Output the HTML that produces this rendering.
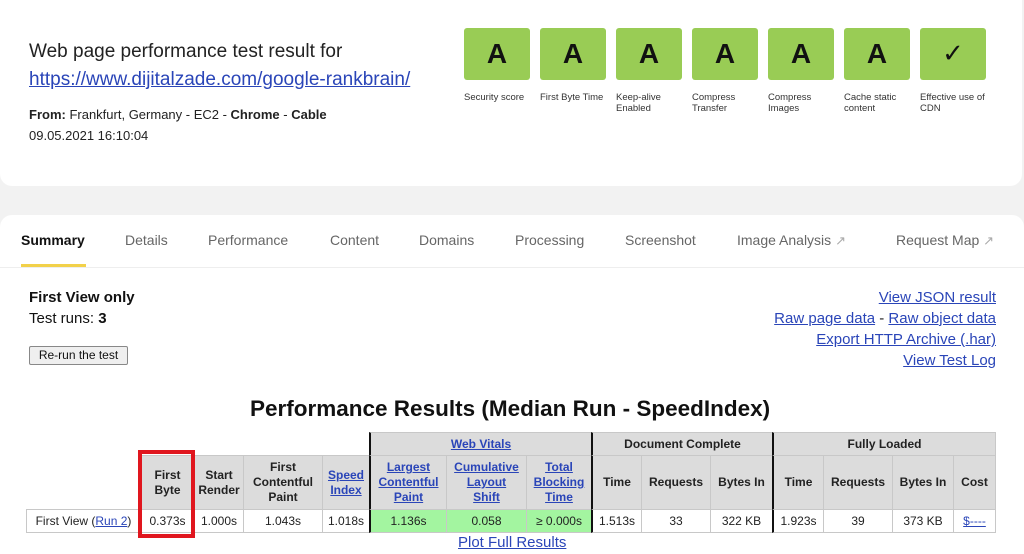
<!DOCTYPE html>
<html><head><meta charset="utf-8"><style>
*{margin:0;padding:0;box-sizing:border-box}
body{width:1024px;height:554px;overflow:hidden;background:#f2f2f2;font-family:"Liberation Sans",Arial,sans-serif;color:#222;position:relative}
.a{position:absolute;white-space:nowrap}
.card1{position:absolute;left:0;top:0;width:1022px;height:186px;background:#fff;border-radius:0 0 12px 12px}
.card2{position:absolute;left:0;top:215px;width:1024px;height:339px;background:#fff;border-radius:12px 12px 0 0}
.g{position:absolute;top:28px;width:66px;height:52px;background:#99cc55;border-radius:3px;font:bold 28px "Liberation Sans",sans-serif;color:#111;text-align:center;line-height:52px}
.gl{position:absolute;top:92px;font-size:9.5px;line-height:11px;color:#333;white-space:normal;width:72px}
.tab{position:absolute;top:232px;font-size:14px;color:#666}
a,.lnk{color:#2a45b8;text-decoration:underline}
.c{position:absolute;border:1px solid #c8c8c8;background:#dcdcdc;font-size:12px;font-weight:bold;color:#222;display:flex;align-items:center;justify-content:center;text-align:center;line-height:15px}
.d{background:#fff;font-weight:normal}
.gr{background:#a3f5a0}
.tl{border-left:2px solid #111}
</style></head><body>
<div class="card1"></div>
<div class="a" style="left:29px;top:41px;font-size:19px;color:#222">Web page performance test result for</div>
<div class="a lnk" style="left:29px;top:69px;font-size:19px">https://www.dijitalzade.com/google-rankbrain/</div>
<div class="a" style="left:29px;top:107px;font-size:13px"><b>From:</b> Frankfurt, Germany - EC2 - <b>Chrome</b> - <b>Cable</b></div>
<div class="a" style="left:29px;top:128px;font-size:13px">09.05.2021 16:10:04</div>

<div class="g" style="left:464px">A</div><div class="gl" style="left:464px">Security score</div>
<div class="g" style="left:540px">A</div><div class="gl" style="left:540px">First Byte Time</div>
<div class="g" style="left:616px">A</div><div class="gl" style="left:616px">Keep-alive Enabled</div>
<div class="g" style="left:692px">A</div><div class="gl" style="left:692px">Compress Transfer</div>
<div class="g" style="left:768px">A</div><div class="gl" style="left:768px">Compress Images</div>
<div class="g" style="left:844px">A</div><div class="gl" style="left:844px">Cache static content</div>
<div class="g" style="left:920px;font-weight:normal;font-family:'DejaVu Sans',sans-serif;font-size:26px">✓</div><div class="gl" style="left:920px">Effective use of CDN</div>

<div class="card2"></div>
<div class="tab" style="left:21px;color:#111;font-weight:bold">Summary</div>
<div class="a" style="left:21px;top:264px;width:65px;height:3px;background:#f2d14a"></div>
<div class="a" style="left:0;top:267px;width:1024px;height:1px;background:#eee"></div>
<div class="tab" style="left:125px">Details</div>
<div class="tab" style="left:208px">Performance</div>
<div class="tab" style="left:330px">Content</div>
<div class="tab" style="left:419px">Domains</div>
<div class="tab" style="left:515px">Processing</div>
<div class="tab" style="left:625px">Screenshot</div>
<div class="tab" style="left:737px">Image Analysis <span style="font-size:13px;color:#aaa">&#x2197;&#xFE0E;</span></div>
<div class="tab" style="left:896px">Request Map <span style="font-size:13px;color:#aaa">&#x2197;&#xFE0E;</span></div>

<div class="a" style="left:29px;top:289px;font-size:15px;font-weight:bold;color:#111">First View only</div>
<div class="a" style="left:29px;top:310px;font-size:15px;color:#111">Test runs: <b>3</b></div>
<div class="a" style="left:29px;top:346px;width:99px;height:19px;border:1px solid #888;border-radius:2px;background:#efefef;font-size:12px;line-height:17px;text-align:center;color:#111">Re-run the test</div>

<div class="a lnk" style="right:28px;top:289px;font-size:15px">View JSON result</div>
<div class="a" style="right:28px;top:310px;font-size:15px"><span class="lnk">Raw page data</span> - <span class="lnk">Raw object data</span></div>
<div class="a lnk" style="right:28px;top:331px;font-size:15px">Export HTTP Archive (.har)</div>
<div class="a lnk" style="right:28px;top:352px;font-size:15px">View Test Log</div>

<div class="a" style="left:250px;top:396px;font-size:22.5px;font-weight:bold;color:#111">Performance Results (Median Run - SpeedIndex)</div>

<div class="c tl" style="left:369px;top:432px;width:223px;height:24px"><span class="lnk">Web Vitals</span></div>
<div class="c tl" style="left:591px;top:432px;width:182px;height:24px">Document Complete</div>
<div class="c tl" style="left:772px;top:432px;width:224px;height:24px">Fully Loaded</div>
<div class="c" style="left:140px;top:455px;width:55px;height:55px">First<br>Byte</div>
<div class="c" style="left:194px;top:455px;width:50px;height:55px">Start<br>Render</div>
<div class="c" style="left:243px;top:455px;width:80px;height:55px">First<br>Contentful<br>Paint</div>
<div class="c" style="left:322px;top:455px;width:48px;height:55px"><span class="lnk">Speed<br>Index</span></div>
<div class="c tl" style="left:369px;top:455px;width:78px;height:55px"><span class="lnk">Largest<br>Contentful<br>Paint</span></div>
<div class="c" style="left:446px;top:455px;width:81px;height:55px"><span class="lnk">Cumulative<br>Layout<br>Shift</span></div>
<div class="c" style="left:526px;top:455px;width:66px;height:55px"><span class="lnk">Total<br>Blocking<br>Time</span></div>
<div class="c tl" style="left:591px;top:455px;width:51px;height:55px">Time</div>
<div class="c" style="left:641px;top:455px;width:70px;height:55px">Requests</div>
<div class="c" style="left:710px;top:455px;width:63px;height:55px">Bytes In</div>
<div class="c tl" style="left:772px;top:455px;width:52px;height:55px">Time</div>
<div class="c" style="left:823px;top:455px;width:70px;height:55px">Requests</div>
<div class="c" style="left:892px;top:455px;width:62px;height:55px">Bytes In</div>
<div class="c" style="left:953px;top:455px;width:43px;height:55px">Cost</div>
<div class="c d" style="left:26px;top:509px;width:115px;height:24px">First View (<span class="lnk">Run 2</span>)</div>
<div class="c d" style="left:140px;top:509px;width:55px;height:24px">0.373s</div>
<div class="c d" style="left:194px;top:509px;width:50px;height:24px">1.000s</div>
<div class="c d" style="left:243px;top:509px;width:80px;height:24px">1.043s</div>
<div class="c d" style="left:322px;top:509px;width:48px;height:24px">1.018s</div>
<div class="c d gr tl" style="left:369px;top:509px;width:78px;height:24px">1.136s</div>
<div class="c d gr" style="left:446px;top:509px;width:81px;height:24px">0.058</div>
<div class="c d gr" style="left:526px;top:509px;width:66px;height:24px">≥ 0.000s</div>
<div class="c d tl" style="left:591px;top:509px;width:51px;height:24px">1.513s</div>
<div class="c d" style="left:641px;top:509px;width:70px;height:24px">33</div>
<div class="c d" style="left:710px;top:509px;width:63px;height:24px">322 KB</div>
<div class="c d tl" style="left:772px;top:509px;width:52px;height:24px">1.923s</div>
<div class="c d" style="left:823px;top:509px;width:70px;height:24px">39</div>
<div class="c d" style="left:892px;top:509px;width:62px;height:24px">373 KB</div>
<div class="c d" style="left:953px;top:509px;width:43px;height:24px"><span class="lnk">$----</span></div>
<div class="a" style="left:138px;top:450px;width:57px;height:88px;border:4px solid #e0161e"></div>
<div class="a lnk" style="left:458px;top:534px;font-size:15px">Plot Full Results</div>
</body></html>
